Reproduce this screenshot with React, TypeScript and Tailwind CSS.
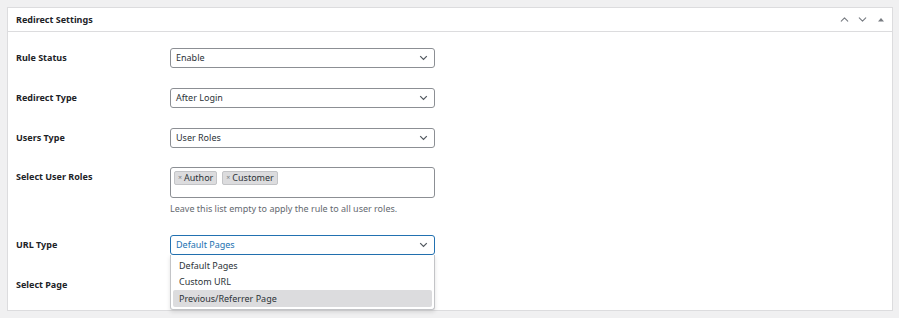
import { ChevronDown, ChevronUp } from 'lucide-react'

const font = { fontFamily: '"Noto Sans", "Open Sans", sans-serif' }

function Caret() {
  return (
    <svg width="9" height="6" viewBox="0 0 9 6" className="text-[#50575e]">
      <path d="M1.2 1.2 L4.5 4.5 L7.8 1.2" fill="none" stroke="currentColor" strokeWidth="1.2" />
    </svg>
  )
}

function Select({ value, active = false }: { value: string; active?: boolean }) {
  return (
    <div
      className={`flex h-[20px] w-[265px] items-center justify-between rounded-[3px] border bg-white pl-[5px] pr-[6px] text-[9px] ${
        active ? 'border-[#2271b1] text-[#2271b1]' : 'border-[#8c8f94] text-[#2c3338]'
      }`}
    >
      <span>{value}</span>
      <Caret />
    </div>
  )
}

function Row({ label, children }: { label: string; children: React.ReactNode }) {
  return (
    <div className="flex items-start">
      <div className="flex h-[20px] w-[162px] items-center pl-2 text-[9px] font-bold text-[#1d2327]">{label}</div>
      <div>{children}</div>
    </div>
  )
}

function Tag({ text }: { text: string }) {
  return (
    <span className="flex h-[14px] items-center gap-[2px] rounded-[2px] border border-[#c3c4c7] bg-[#dcdcde] px-[3px] text-[9px] text-[#2c3338]">
      <span className="text-[7px] text-[#787c82]">×</span>
      {text}
    </span>
  )
}

export default function App() {
  return (
    <div className="h-[318px] w-[899px] bg-[#f0f0f1] pl-[7px] pr-[6px] pt-[7px]" style={font}>
      <div className="h-[304px] border border-[#dcdcde] bg-white">
        {/* header */}
        <div className="flex h-[24px] items-center justify-between border-b border-[#dcdcde] pl-2 pr-[6px]">
          <h2 className="text-[9px] font-bold text-[#1d2327]">Redirect Settings</h2>
          <div className="flex items-center gap-[5px] text-[#787c82]">
            <ChevronUp size={13} strokeWidth={2} />
            <ChevronDown size={13} strokeWidth={2} />
            <svg width="10" height="10" viewBox="0 0 10 10" className="ml-[2px]">
              <path d="M2 6.5 L5 3 L8 6.5 Z" fill="currentColor" />
            </svg>
          </div>
        </div>

        {/* body */}
        <div className="flex flex-col pt-[16px]">
          <Row label="Rule Status">
            <Select value="Enable" />
          </Row>
          <div className="mt-[20px]">
            <Row label="Redirect Type">
              <Select value="After Login" />
            </Row>
          </div>
          <div className="mt-[20px]">
            <Row label="Users Type">
              <Select value="User Roles" />
            </Row>
          </div>
          <div className="mt-[19px]">
            <div className="flex items-start">
              <div className="flex h-[20px] w-[162px] items-center pl-2 text-[9px] font-bold text-[#1d2327]">
                Select User Roles
              </div>
              <div>
                <div className="flex h-[31px] w-[265px] items-start gap-[5px] rounded-[3px] border border-[#8c8f94] bg-white pl-[3px] pt-[3px]">
                  <Tag text="Author" />
                  <Tag text="Customer" />
                </div>
                <p className="mt-[4px] text-[9px] leading-[13px] text-[#646970]">
                  Leave this list empty to apply the rule to all user roles.
                </p>
              </div>
            </div>
          </div>
          <div className="relative mt-[20px]">
            <Row label="URL Type">
              <Select value="Default Pages" active />
            </Row>
            <div className="mt-[20px]">
              <Row label="Select Page">
                <Select value="" />
              </Row>
            </div>
            {/* open dropdown */}
            <div className="absolute left-[162px] top-[20px] w-[265px] rounded-b-[3px] border border-t-0 border-[#c3c4c7] bg-white px-[2px] pb-[2px] pt-[3px] text-[9px] text-[#2c3338] shadow-[0_2px_4px_rgba(0,0,0,0.12)]">
              <div className="flex h-[16px] items-center pl-[6px]">Default Pages</div>
              <div className="flex h-[16px] items-center pl-[6px]">Custom URL</div>
              <div className="flex h-[17px] items-center rounded-[2px] bg-[#dcdcde] pl-[6px]">Previous/Referrer Page</div>
            </div>
          </div>
        </div>
      </div>
    </div>
  )
}
